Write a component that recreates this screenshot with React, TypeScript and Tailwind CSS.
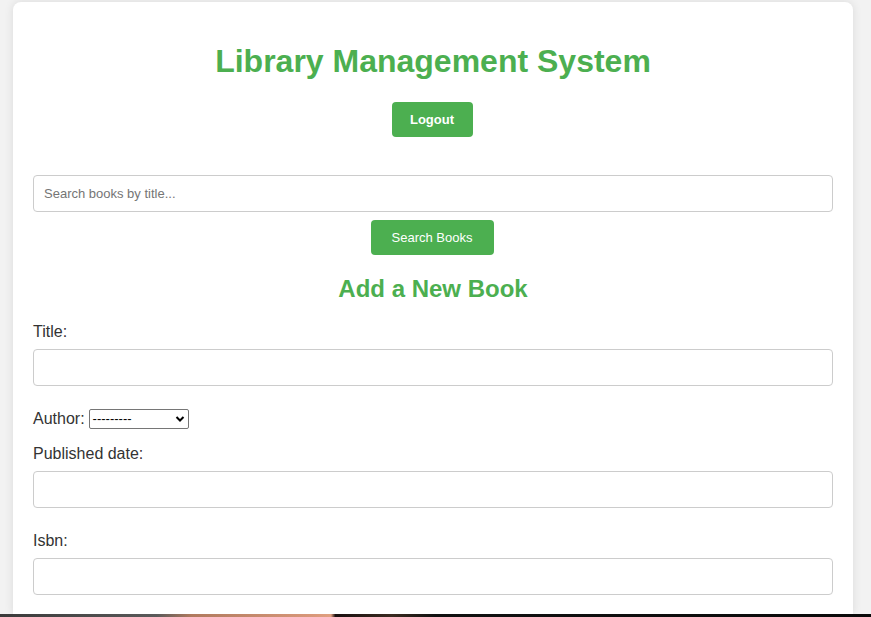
import React from "react";

export default function App() {
  return (
    <div
      className="h-[617px] w-full overflow-hidden bg-[#f2f2f2] flex flex-col"
      style={{ fontFamily: '"Liberation Sans", Arial, sans-serif' }}
    >
      <div className="flex-1 min-h-0 pt-[2px]">
        <div className="ml-[13px] w-[840px] h-full bg-white rounded-t-lg shadow-[0_0_10px_rgba(0,0,0,0.1)] px-5 pt-5">
          <h1 className="text-center text-[32px] leading-[37px] font-bold text-[#4caf50] mt-[21px] mb-[22px]">
            Library Management System
          </h1>
          <div className="flex justify-center">
            <button className="w-[81px] h-[35px] bg-[#4caf50] text-white text-[13px] font-bold rounded-[4px] -translate-x-[1px]">
              Logout
            </button>
          </div>
          <div className="mt-[38px]">
            <input
              type="text"
              placeholder="Search books by title..."
              className="block w-full h-[37px] border border-[#ccc] rounded-[4px] px-[10px] text-[13px] text-[#333] placeholder:text-[#757575] outline-none"
            />
            <div className="flex justify-center mt-2">
              <button className="w-[123px] h-[35px] bg-[#4caf50] text-white text-[13px] rounded-[4px] -translate-x-[1px]">
                Search Books
              </button>
            </div>
          </div>
          <h2 className="text-center text-[24px] leading-[28px] font-bold text-[#4caf50] mt-[20px] mb-[19px]">
            Add a New Book
          </h2>
          <div className="text-[16px] leading-[18px] text-[#333]">
            <label className="block pt-[1px]">Title:</label>
            <input
              type="text"
              className="block w-full h-[37px] border border-[#ccc] rounded-[4px] mt-[8px] outline-none"
            />
            <div className="flex items-center mt-[23px] h-[20px]">
              <span>Author:</span>
              <div className="relative ml-[4px] w-[100px] h-[20px] border border-[#767676] rounded-[2px] bg-white">
                <span className="absolute left-[3px] top-[2px] text-[13px] leading-[14px] text-black">---------</span>
                <svg
                  className="absolute right-[3px] top-[5px]"
                  width="10"
                  height="8"
                  viewBox="0 0 10 8"
                  fill="none"
                >
                  <path d="M1.5 2 L5 5.5 L8.5 2" stroke="#000" strokeWidth="2" />
                </svg>
              </div>
            </div>
            <label className="block mt-[15px] pt-[1px]">Published date:</label>
            <input
              type="text"
              className="block w-full h-[37px] border border-[#ccc] rounded-[4px] mt-[8px] outline-none"
            />
            <label className="block mt-[23px] pt-[1px]">Isbn:</label>
            <input
              type="text"
              className="block w-full h-[37px] border border-[#ccc] rounded-[4px] mt-[8px] outline-none"
            />
          </div>
        </div>
      </div>
      <div className="h-[3px] w-full bg-[linear-gradient(90deg,#3a3a3a_0%,#5a5a5a_18%,#b07a5e_22%,#d9987a_36%,#e0a080_38%,#1a1010_38.5%,#3a2a20_45%,#111_50%,#0a0a0a_100%)]" />
    </div>
  );
}
